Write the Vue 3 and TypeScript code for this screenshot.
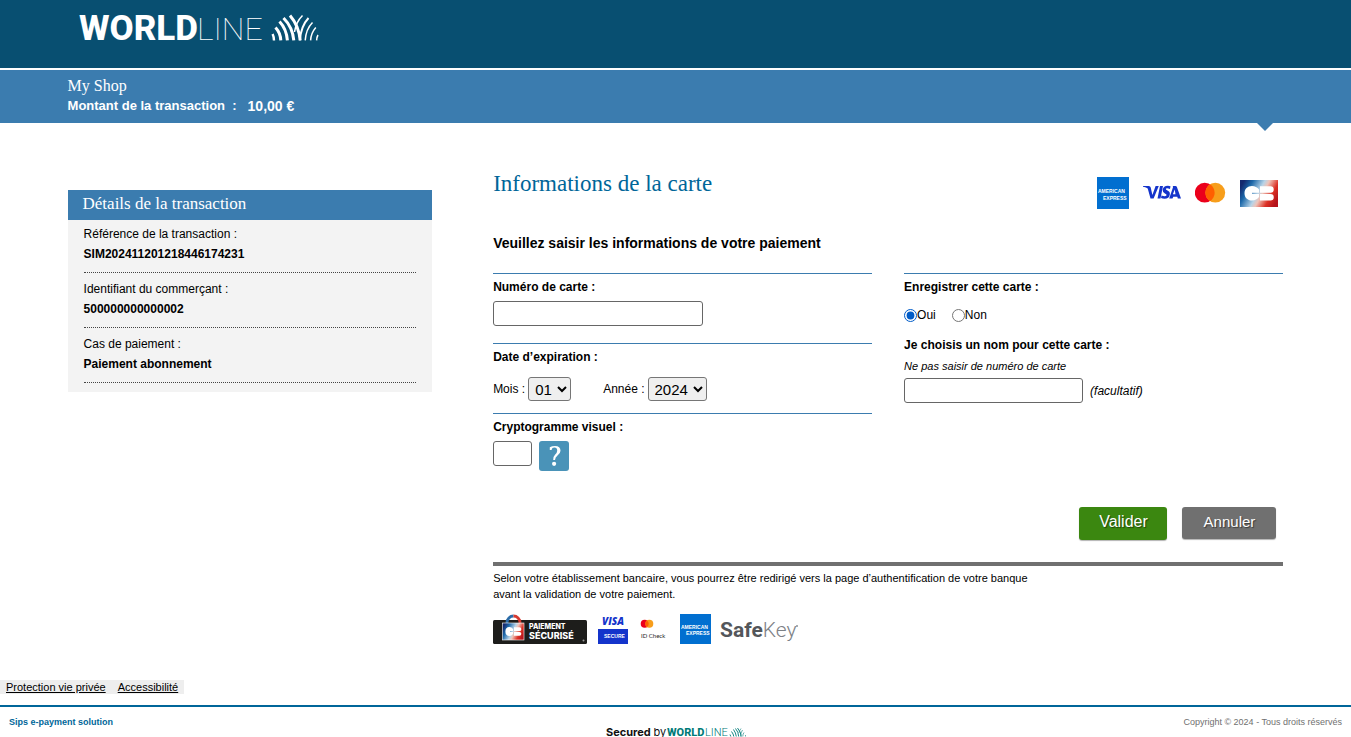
<script setup lang="ts">
import { ref } from 'vue'

interface Detail {
  label: string
  value: string
}

const details: Detail[] = [
  { label: 'Référence de la transaction :', value: 'SIM202411201218446174231' },
  { label: 'Identifiant du commerçant :', value: '500000000000002' },
  { label: 'Cas de paiement :', value: 'Paiement abonnement' },
]

const months = Array.from({ length: 12 }, (_, i) => String(i + 1).padStart(2, '0'))
const years = Array.from({ length: 20 }, (_, i) => String(2024 + i))

const cardNumber = ref('')
const month = ref('01')
const year = ref('2024')
const crypto = ref('')
const save = ref('oui')
const cardName = ref('')
</script>

<template>
  <div class="page">
    <header class="top">
      <svg class="brand" width="240" height="28" viewBox="0 0 240 28" role="img" aria-label="Worldline">
        <text class="brand-bold" x="0" y="26">WORLD</text>
        <text class="brand-thin" x="118" y="26">LINE</text>
        <g transform="translate(192 1)" fill="none" stroke="#fff">
          <g stroke-width="3">
            <path d="M1.6 19Q3 22 3 25.4" stroke-width="2.4" />
            <path d="M4.500 12.500Q9.500 18 9.800 25.400" />
            <path d="M8.500 6.500Q15.500 14 16.400 25.400" />
            <path d="M12.500 3Q21.500 12 22.800 25.400" />
            <path d="M19 .5Q28 11 29.200 25.400" />
          </g>
          <g stroke-width="1.500">
            <path d="M31.500 .5Q25 7 23.500 17" />
            <path d="M37.500 3Q30 11 28.800 25.400" stroke-width="2" />
            <path d="M41.500 7.500Q35 14 34.200 25.400" />
            <path d="M44.800 12.500Q40 18 39.600 25.400" />
            <path d="M47 20Q45.800 22 45.600 25.400" />
          </g>
        </g>
      </svg>
    </header>

    <section class="shop">
      <p class="shop-name">My Shop</p>
      <p class="amount"><span>Montant de la transaction &nbsp;:</span><span class="sum">10,00 €</span></p>
    </section>

    <div class="content">
      <aside class="details">
        <h2>Détails de la transaction</h2>
        <dl>
          <div v-for="d in details" :key="d.label" class="detail">
            <dt>{{ d.label }}</dt>
            <dd>{{ d.value }}</dd>
          </div>
        </dl>
      </aside>

      <main>
        <div class="title-row">
          <h1>Informations de la carte</h1>
          <div class="cards">
            <svg width="32" height="32" viewBox="0 0 32 32" role="img" aria-label="American Express">
              <rect width="32" height="32" fill="#016fd0" />
              <text class="amex" x="1" y="16">AMERICAN</text>
              <text class="amex" x="6" y="23">EXPRESS</text>
            </svg>
            <svg width="40" height="20" viewBox="0 0 40 20" role="img" aria-label="Visa">
              <path d="M1 3h5.800q1.600 0 1.900 1.500l1.700 7.600L13.600 3h3.200l-5.200 12.500H8.500L6 6.500Q5.800 5.500 5 5.100 3.500 4.200 1 3.700z" fill="#1434cb" />
              <path transform="translate(0 -1)" d="M18 4h3l-2.500 12.500h-3zM30.800 4h2.700q1 0 1.400 1L39 16.500h-3.200l-.5-1.800h-4l-.8 1.800h-3.300L31 5.200zm1.900 3.500-1.800 4.800h2.600zM28.500 4.300 28 6.900q-4-1.400-4.200.2 0 .8 1.700 1.500 2.700 1.200 2.300 3.800-.6 4.300-5.300 4.300-2 0-3.500-.6l.5-2.700q2 .9 3.500.8 1.500-.1 1.600-1.200 0-.7-1.700-1.600-2.500-1.300-2.200-3.600.6-4 5.200-4 1.500 0 2.600.5z" fill="#1434cb" />
            </svg>
            <svg width="32" height="22" viewBox="0 0 32 22" role="img" aria-label="Mastercard">
              <circle cx="9.700" cy="10.700" r="9.900" fill="#eb001b" />
              <circle cx="20.300" cy="10.700" r="9.900" fill="#f79e1b" />
              <path d="M15 2.300a9.900 9.900 0 0 1 0 16.800a9.900 9.900 0 0 1 0-16.800z" fill="#ff5f00" />
            </svg>
            <svg width="38" height="27" viewBox="0 0 38 27" role="img" aria-label="CB">
              <defs>
                <linearGradient id="cb" x1="0" y1=".3" x2="1" y2=".7">
                  <stop offset="0" stop-color="#14286e" />
                  <stop offset=".2" stop-color="#1c68a9" />
                  <stop offset=".47" stop-color="#b7d4e8" />
                  <stop offset=".58" stop-color="#efc3b8" />
                  <stop offset=".8" stop-color="#dc3125" />
                  <stop offset="1" stop-color="#b5131b" />
                </linearGradient>
              </defs>
              <rect width="38" height="27" fill="url(#cb)" />
              <path d="M19 12.700V9.500Q16.500 6 12 6C7.500 6 4.500 9 4.500 13.200s3 7.300 7.500 7.300q4.500 0 7-3.400v-3.200H12v-1.200zM20 6.300h10.500a3.200 3.200 0 0 1 0 6.400H20zM20 13.900h10.500a3.200 3.200 0 0 1 0 6.500H20z" fill="#fff" />
            </svg>
          </div>
        </div>

        <form @submit.prevent>
          <h3>Veuillez saisir les informations de votre paiement</h3>
          <div class="columns">
            <div class="col">
              <div class="field">
                <label class="caption" for="number">Numéro de carte :</label>
                <input id="number" v-model="cardNumber" class="text number" type="text" />
              </div>
              <div class="field">
                <p class="caption">Date d’expiration :</p>
                <div class="dates">
                  <label for="month">Mois :</label>
                  <select id="month" v-model="month" class="month">
                    <option v-for="m in months" :key="m">{{ m }}</option>
                  </select>
                  <label class="year-label" for="year">Année :</label>
                  <select id="year" v-model="year" class="year">
                    <option v-for="y in years" :key="y">{{ y }}</option>
                  </select>
                </div>
              </div>
              <div class="field">
                <label class="caption" for="crypto">Cryptogramme visuel :</label>
                <div class="crypto-row">
                  <input id="crypto" v-model="crypto" class="text crypto" type="text" />
                  <button class="help" type="button" aria-label="Aide">
                    <svg width="30" height="30" viewBox="0 0 30 30" aria-hidden="true">
                      <path d="M10.800 9V6.300Q13 5 16 5 21.500 5.200 21.500 9.800 21.400 12.600 18.500 14.500 16.200 16 16 19H14.200Q14 15.500 16 13.700 18.200 12 18.200 9.800 18.200 6.600 15.300 6.600 13 6.600 12.500 9z" fill="#fff" />
                      <circle cx="15.100" cy="22.800" r="2.100" fill="#fff" />
                    </svg>
                  </button>
                </div>
              </div>
            </div>

            <div class="col">
              <div class="field">
                <p class="caption">Enregistrer cette carte :</p>
                <div class="radios">
                  <label><input v-model="save" type="radio" name="save" value="oui" />Oui</label>
                  <label><input v-model="save" type="radio" name="save" value="non" />Non</label>
                </div>
                <label class="caption" for="name">Je choisis un nom pour cette carte :</label>
                <p class="hint">Ne pas saisir de numéro de carte</p>
                <div class="name-row">
                  <input id="name" v-model="cardName" class="text name" type="text" />
                  <em>(facultatif)</em>
                </div>
              </div>
            </div>
          </div>

          <div class="actions">
            <button class="ok" type="submit">Valider</button>
            <button class="cancel" type="button">Annuler</button>
          </div>
        </form>

        <section class="bank">
          <p>
            Selon votre établissement bancaire, vous pourrez être redirigé vers la page d’authentification de votre banque<br />
            avant la validation de votre paiement.
          </p>
          <div class="schemes">
            <svg width="94" height="30" viewBox="0 0 94 30" role="img" aria-label="Paiement sécurisé">
              <rect y="6" width="94" height="24" rx="1.500" fill="#1d1d1b" />
              <path d="M14 10V8.500a6.500 6.500 0 0 1 6.500-6.500" fill="none" stroke="#2b6ca8" stroke-width="2.800" />
              <path d="M20.500 2A6.500 6.500 0 0 1 27 8.500V10" fill="none" stroke="#d63a30" stroke-width="2.800" />
              <rect x="9.500" y="9" width="21.500" height="17" fill="url(#cb)" stroke="#fff" stroke-width=".6" />
              <path d="M20 17V15q-1.200-2-3.600-2-4 .2-4 4.500t4 4.500q2.400 0 3.600-2v-2h-3v-1zM21 13.200h5.400a1.900 1.900 0 0 1 0 3.900H21zM21 17.900h5.400a1.900 1.900 0 0 1 0 3.900H21z" fill="#fff" />
              <text class="secure-small" x="36" y="15">PAIEMENT</text>
              <text class="secure-big" x="36" y="25">SÉCURISÉ</text>
              <circle cx="90.500" cy="26.500" r="1" fill="#999" />
            </svg>
            <svg width="30" height="30" viewBox="0 0 30 30" role="img" aria-label="Visa Secure">
              <text class="visa" x="4" y="11">VISA</text>
              <rect y="15" width="30" height="15" fill="#1434cb" />
              <text class="visa-secure" x="6" y="24">SECURE</text>
            </svg>
            <svg width="30" height="30" viewBox="0 0 30 30" role="img" aria-label="Mastercard ID Check">
              <circle cx="5.700" cy="9.800" r="4" fill="#eb001b" />
              <circle cx="10.300" cy="9.800" r="4" fill="#f79e1b" />
              <path d="M8 6.500a4 4 0 0 1 0 6.600a4 4 0 0 1 0-6.600z" fill="#ff5f00" />
              <text class="check" x="2" y="24">ID Check</text>
            </svg>
            <svg width="120" height="30" viewBox="0 0 120 30" role="img" aria-label="American Express SafeKey">
              <rect width="31" height="30" fill="#016fd0" />
              <text class="amex" x="1" y="15">AMERICAN</text>
              <text class="amex" x="6" y="21">EXPRESS</text>
              <text class="safekey" x="40" y="23">Safe<tspan class="key">Key</tspan></text>
              <circle cx="117" cy="12" r="1" fill="#8b9095" />
            </svg>
          </div>
        </section>
      </main>
    </div>

    <nav class="links">
      <a href="#">Protection vie privée</a>
      <a href="#">Accessibilité</a>
    </nav>

    <footer>
      <strong>Sips e-payment solution</strong>
      <svg width="140" height="14" viewBox="0 0 140 14" role="img" aria-label="Secured by Worldline">
        <text class="secured" x="0" y="12">Secured <tspan class="by">by</tspan></text>
        <text class="wl-bold" x="61" y="12">WORLD</text>
        <text class="wl-thin" x="99" y="12">LINE</text>
        <g transform="translate(-1 1)" fill="none" stroke="#007a78" stroke-width=".9">
          <path d="M125 9.500l.8 2M126.500 6.500Q128.500 9 128.800 11.500M128.500 4.500Q131 8 131.300 11.500M130.500 3.500Q133.500 7 133.700 11.500M132.500 3Q136 7 136.300 11.500" />
          <path d="M136 3.500Q134 6 134 8M137.500 5Q135.500 8 135.500 11.500M139 7.500Q137.800 9 137.800 11.500M140.500 10v1.500" stroke-width=".6" />
        </g>
      </svg>
      <span class="copyright">Copyright © 2024 - Tous droits réservés</span>
    </footer>
  </div>
</template>

<style>
body {
  margin: 0;
  background: #fff;
}
</style>

<style scoped>
.page {
  font: 12px/20px "Liberation Sans", Arial, sans-serif;
  color: #000;
}
.page * {
  box-sizing: border-box;
}
p, h1, h2, h3, dl, dd {
  margin: 0;
}
svg {
  display: block;
  flex: none;
}
.top {
  height: 70px;
  padding: 14px 79px;
  background: #084f71;
  border-bottom: 2px solid #fff;
}
.brand {
  overflow: visible;
}
.brand-bold {
  font: 800 35px Roboto, sans-serif;
  fill: #fff;
}
.brand-thin {
  font: 100 32px Roboto, sans-serif;
  fill: #fff;
}
.shop {
  position: relative;
  height: 53px;
  padding: 6px 5%;
  background: #3b7caf;
  color: #fff;
}
.shop::after {
  content: "";
  position: absolute;
  right: 78px;
  top: 100%;
  border: 8px solid transparent;
  border-top-color: #3b7caf;
  border-bottom: 0;
}
.shop-name {
  font: 16px/20px "Liberation Serif", serif;
}
.amount {
  display: flex;
  gap: 11px;
  font-size: 13px;
  font-weight: bold;
}
.sum {
  font-size: 14px;
}
.content {
  display: flex;
  justify-content: space-between;
  align-items: flex-start;
  padding: 51px 5% 0;
}
.details {
  width: 30%;
  margin-top: 16px;
  background: #f3f3f3;
}
.details h2 {
  padding: 0 15px;
  background: #3b7caf;
  color: #fff;
  font: 17px/28px "Liberation Serif", serif;
  padding-bottom: 2px;
}
.details dl {
  padding: 4px 16px 3px;
}
.detail {
  padding-bottom: 8px;
  margin-bottom: 6px;
  border-bottom: 1px dotted #444;
}
.detail dd {
  font-weight: bold;
}
main {
  width: 65%;
}
.title-row {
  display: flex;
  justify-content: space-between;
  align-items: flex-start;
}
h1 {
  font: 23px/20px "Liberation Serif", serif;
  color: #069;
}
.cards {
  display: flex;
  align-items: center;
  gap: 13px;
  padding: 3px 5px 0 0;
}
.amex {
  font: bold 5px "Liberation Sans", sans-serif;
  fill: #fff;
}
h3 {
  margin-top: 24px;
  font-size: 14px;
  line-height: 20px;
}
.columns {
  display: flex;
  justify-content: space-between;
  margin-top: 20px;
}
.col {
  width: 48%;
}
.field {
  height: 70px;
  padding-top: 3px;
  border-top: 1px solid #3b7caf;
}
.caption {
  display: block;
  font-weight: bold;
}
.text {
  display: block;
  height: 25px;
  margin: 0;
  padding: 2px 6px;
  border: 1px solid #666;
  border-radius: 3px;
  background: #fff;
  font: 14px "Liberation Sans", sans-serif;
}
.number {
  width: 210px;
  margin-top: 4px;
}
.dates {
  display: flex;
  align-items: center;
  gap: 3px;
  padding-top: 10px;
}
.year-label {
  margin-left: 29px;
}
select {
  height: 24px;
  margin: 0;
  padding: 0 2px;
  border: 1px solid #767676;
  border-radius: 3px;
  background: #efefef;
  color: #000;
  font: 15px "Liberation Sans", sans-serif;
}
.month {
  width: 43px;
}
.year {
  width: 59px;
}
.crypto-row {
  display: flex;
  gap: 7px;
  margin-top: 4px;
}
.crypto {
  width: 39px;
}
.help {
  width: 30px;
  height: 30px;
  padding: 0;
  border: 0;
  border-radius: 3px;
  background: #4a93b8;
}
.radios {
  display: flex;
  gap: 16px;
  padding: 8px 0 10px;
}
.radios label {
  display: flex;
  align-items: center;
}
.radios input {
  width: 13px;
  height: 13px;
  margin: 0;
  accent-color: #005cc8;
}
.hint {
  font-size: 11px;
  font-style: italic;
  line-height: 22px;
}
.name-row {
  display: flex;
  align-items: center;
  gap: 7px;
  margin-top: 1px;
}
.name {
  width: 179px;
}
.actions {
  display: flex;
  justify-content: flex-end;
  align-items: flex-start;
  gap: 15px;
  margin-top: 24px;
  padding-right: 7px;
}
.actions button {
  height: 32px;
  padding: 0 0 3px;
  border: 0;
  border-radius: 3px;
  color: #fff;
  font: 15px "Liberation Sans", sans-serif;
  text-shadow: 1px 1px 1px rgba(0, 0, 0, .5);
  box-shadow: 0 1px 1px rgba(0, 0, 0, .3);
}
.actions .ok {
  width: 88px;
  height: 33px;
  background: #3b8710;
  font-size: 16px;
}
.actions .cancel {
  width: 94px;
  background: #707070;
}
.bank {
  margin-top: 22px;
  padding-top: 4px;
  border-top: 4px solid #707070;
  font-size: 11px;
  line-height: 16px;
}
.schemes {
  display: flex;
  gap: 11px;
  margin-top: 12px;
}
.secure-small, .secure-big {
  font: 800 7px Inter, sans-serif;
  fill: #fff;
}
.secure-big {
  font-size: 9px;
}
.visa {
  font: italic 800 10px "Open Sans", sans-serif;
  fill: #1434cb;
}
.visa-secure {
  font: bold 5px "Liberation Sans", sans-serif;
  fill: #fff;
}
.check {
  font: 6px Lato, sans-serif;
  fill: #222;
}
.safekey {
  font: bold 21px Roboto, sans-serif;
  fill: #53565a;
}
.key {
  font-weight: 300;
  fill: #7d8186;
}
.links {
  display: flex;
  gap: 12px;
  width: fit-content;
  margin-top: 36px;
  padding: 0 6px;
  background: #eee;
  font-size: 11px;
  line-height: 14px;
}
.links a {
  color: #000;
}
footer {
  display: grid;
  grid-template-columns: 1fr auto 1fr;
  align-items: start;
  margin-top: 11px;
  padding: 5px 9px 0;
  border-top: 2px solid #069;
  font-size: 9px;
  line-height: 20px;
}
footer strong {
  color: #069;
}
footer svg {
  margin-top: 12px;
}
.copyright {
  color: #707070;
  text-align: right;
}
.secured {
  font: bold 11px Inter, sans-serif;
  fill: #111;
}
.by {
  font-weight: 400;
}
.wl-bold {
  font: 800 11px Roboto, sans-serif;
  fill: #007a78;
}
.wl-thin {
  font: 300 11px Roboto, sans-serif;
  fill: #007a78;
}
</style>
